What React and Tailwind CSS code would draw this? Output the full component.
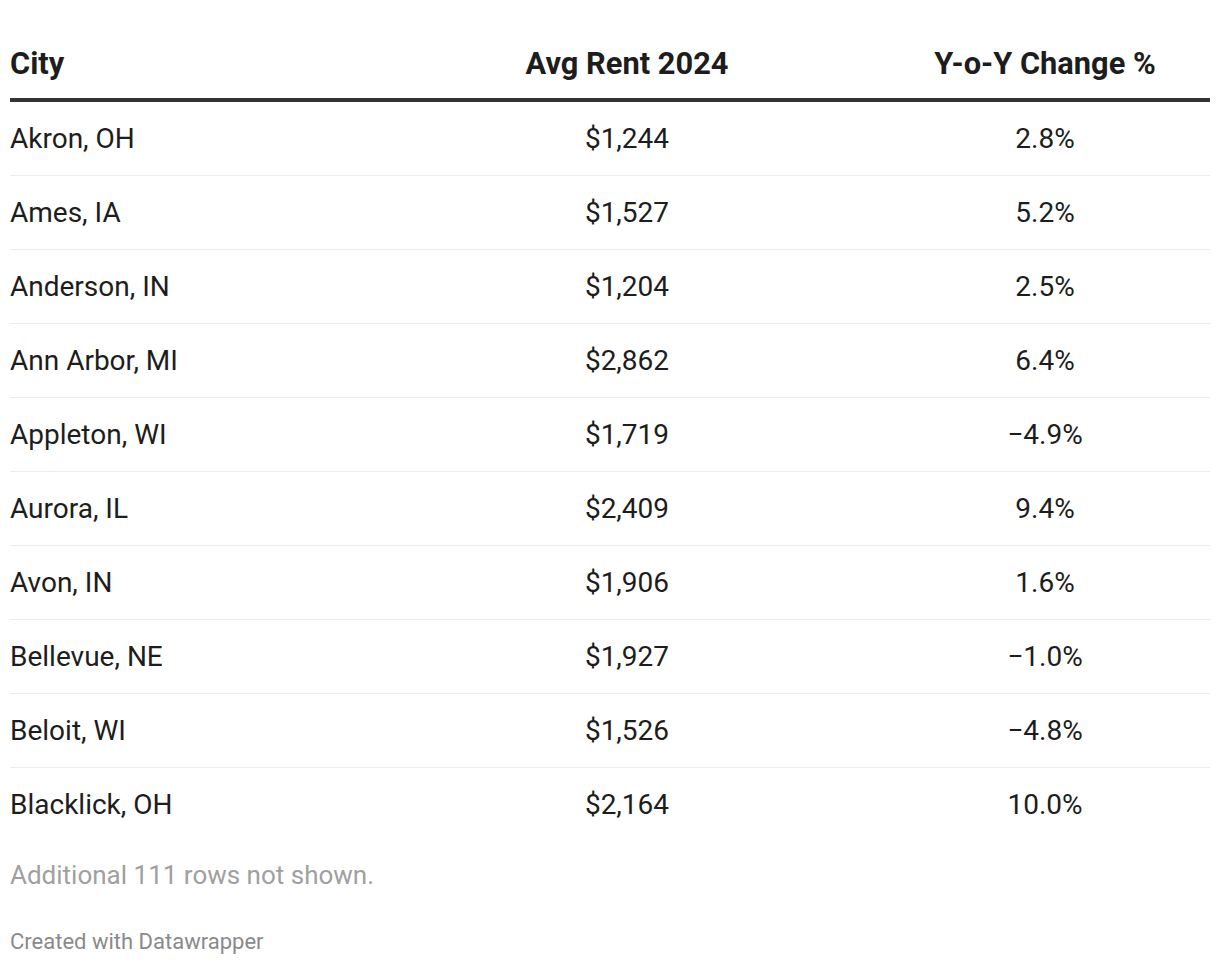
const rows = [
  ['Akron, OH', '$1,244', '2.8%'],
  ['Ames, IA', '$1,527', '5.2%'],
  ['Anderson, IN', '$1,204', '2.5%'],
  ['Ann Arbor, MI', '$2,862', '6.4%'],
  ['Appleton, WI', '$1,719', '\u22124.9%'],
  ['Aurora, IL', '$2,409', '9.4%'],
  ['Avon, IN', '$1,906', '1.6%'],
  ['Bellevue, NE', '$1,927', '\u22121.0%'],
  ['Beloit, WI', '$1,526', '\u22124.8%'],
  ['Blacklick, OH', '$2,164', '10.0%'],
];

export default function App() {
  return (
    <div className="min-h-screen bg-white px-[10px] pt-[44px] text-[#1d1d1d]" style={{ fontFamily: 'Roboto, "Liberation Sans", sans-serif' }}>
      <div className="grid grid-cols-[364px_506px_1fr] items-end border-b-4 border-[#333] pb-[14px] text-[30.8px] font-bold leading-[40px]">
        <div>City</div>
        <div className="text-center">Avg Rent 2024</div>
        <div className="text-center">Y-o-Y Change %</div>
      </div>
      {rows.map((r, i) => (
        <div key={i} className={`grid grid-cols-[364px_506px_1fr] h-[74px] items-center text-[28px] ${i < rows.length - 1 ? 'border-b border-[#ececec]' : ''}`}>
          <div>{r[0]}</div>
          <div className="text-center">{r[1]}</div>
          <div className="text-center">{r[2]}</div>
        </div>
      ))}
      <p className="mt-[18px] text-[26px] leading-[30px] text-[#a0a0a0]">Additional 111 rows not shown.</p>
      <p className="mt-[40px] text-[22px] leading-[24px] text-[#8a8a8a]">Created with Datawrapper</p>
    </div>
  );
}
